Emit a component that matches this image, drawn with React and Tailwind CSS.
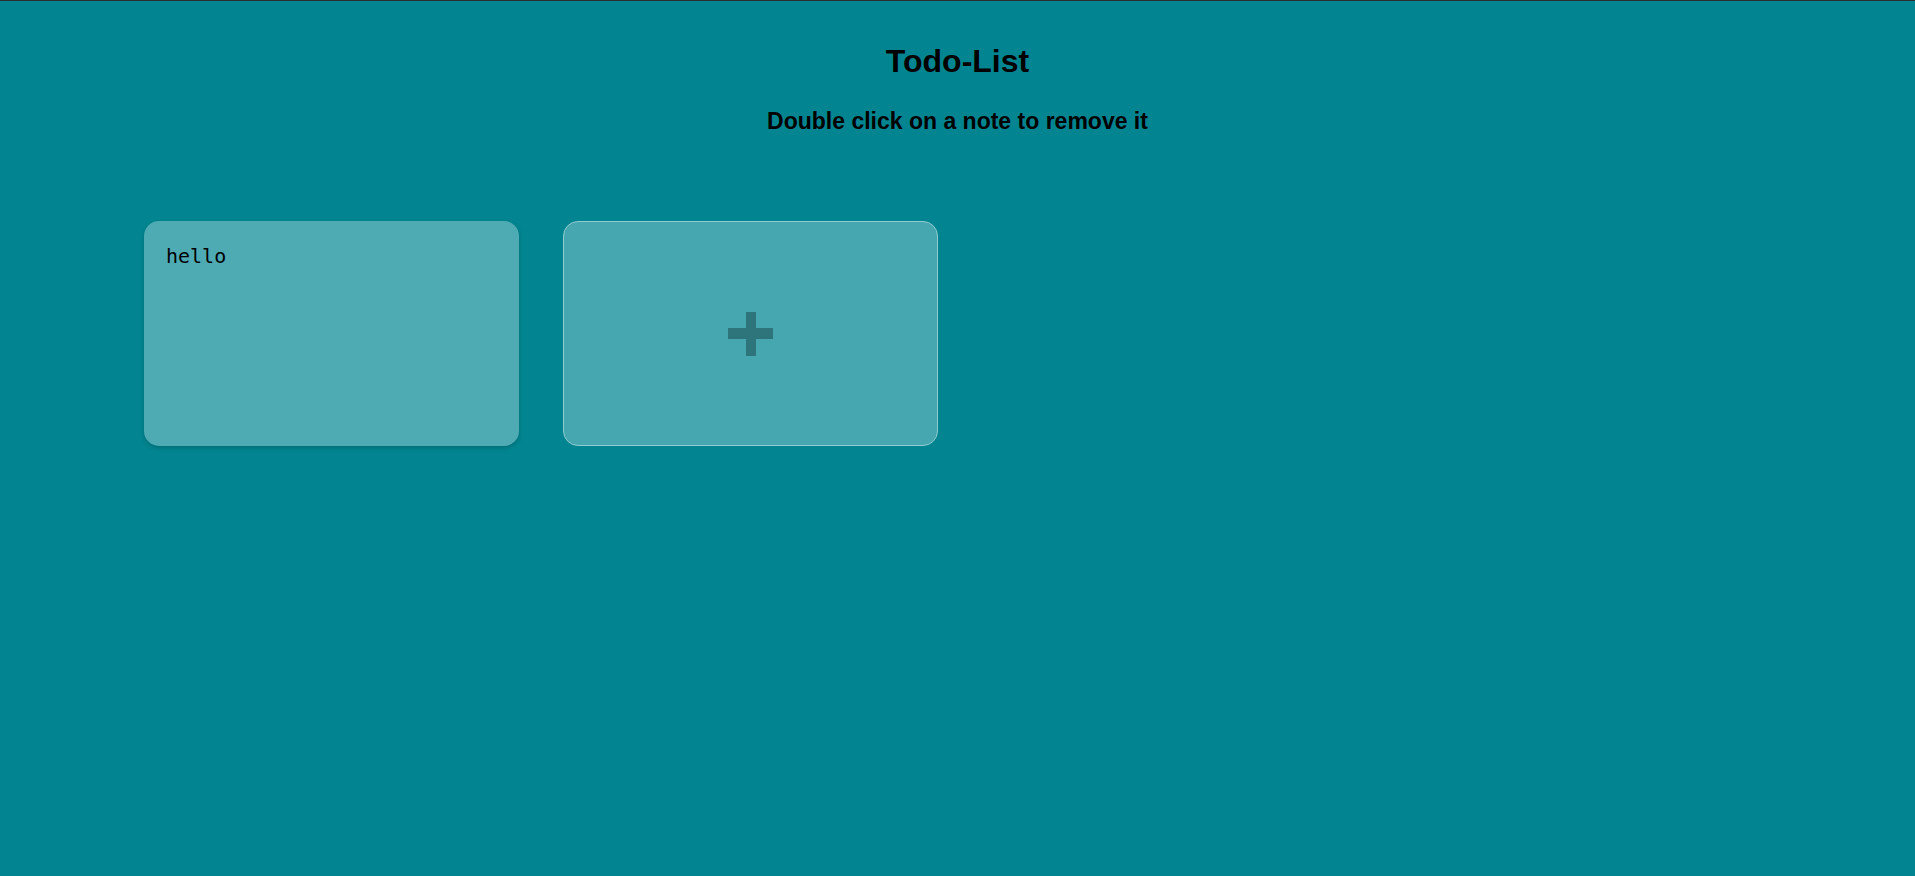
import React from "react";

const notes = [{ id: 1, text: "hello" }];

const PlusIcon = () => (
  <svg width="45" height="44" viewBox="0 0 45 44" className="text-[#2e747b]">
    <rect x="18" y="0" width="10" height="44" fill="currentColor" />
    <rect x="0" y="16" width="45" height="11" fill="currentColor" />
  </svg>
);

const App = () => {
  return (
    <div className="min-h-screen bg-[#028590] border-t border-[#2b2d31] font-['Liberation_Sans',Arial,sans-serif]">
      {/* header */}
      <div className="flex flex-col items-center text-black font-bold">
        <h1 className="mt-[42px] text-[32px] leading-[36px]">Todo-List</h1>
        <h2 className="mt-[29px] text-[23px] leading-[26px]">
          Double click on a note to remove it
        </h2>
      </div>

      {/* notes */}
      <div className="flex gap-[44px] pl-[144px] mt-[87px]">
        {notes.map((note) => (
          <div
            key={note.id}
            className="w-[375px] h-[225px] rounded-[15px] bg-[#4eabb3] shadow-[0_2px_4px_rgba(0,0,0,0.18)] pt-[23px] pl-[22px] font-['DejaVu_Sans_Mono',monospace] text-[20px] leading-[24px] text-black"
          >
            {note.text}
          </div>
        ))}
        <button className="w-[375px] h-[225px] rounded-[15px] bg-[#47a7b0] border border-[#8fcbd0] flex items-center justify-center cursor-pointer">
          <PlusIcon />
        </button>
      </div>
    </div>
  );
};

export default App;
